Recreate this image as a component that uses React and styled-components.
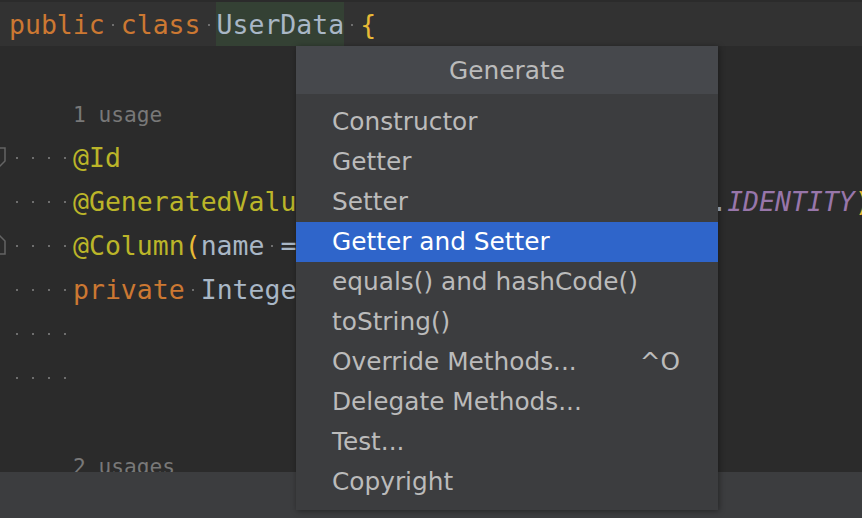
import styled, { createGlobalStyle } from 'styled-components';

const GlobalStyle = createGlobalStyle`
	html, body {
		margin: 0;
		padding: 0;
		background: #2b2b2b;
	}
`

const Page = styled.div`
	position: relative;
	width: 862px;
	height: 518px;
	overflow: hidden;
	display: flex;
	flex-direction: column;
	background: #2b2b2b;
	font-family: "DejaVu Sans Mono", "Liberation Mono", monospace;
	font-size: 26.5px;
`

const ClassLine = styled.div`
	display: flex;
	align-items: center;
	height: 44px;
	margin-top: 2px;
	padding-left: 9px;
	background: #323232;
	white-space: pre;
	flex: none;
`

const CodeArea = styled.div`
	flex: 1;
	min-height: 0;
	overflow: hidden;
	padding-top: 45px;
`

const Line = styled.div`
	position: relative;
	display: flex;
	align-items: center;
	height: 44px;
	padding-left: 9px;
	white-space: pre;
`

const BottomBar = styled.div`
	flex: none;
	height: 46px;
	background: #3c3d3f;
`

const Token = styled.span`
	color: ${p => p.$color || '#a9b7c6'};
	font-style: ${p => p.$italic ? 'italic' : 'normal'};
`

const Space = styled.span`
	flex: none;
	align-self: stretch;
	width: ${p => (p.$count || 1) * 16}px;
	background: radial-gradient(circle at center, #6e6e6e 0.8px, transparent 1.3px) 0 1px / 16px 100% repeat-x;
`

const Highlight = styled.span`
	display: flex;
	align-items: center;
	align-self: stretch;
	margin-left: -1px;
	padding-left: 1px;
	background: #344134;
	color: #a9b7c6;
`

const Hint = styled.span`
	color: #787878;
	font-size: 21.2px;
	padding: 2px 0 0 64px;
`

const GutterIcon = styled.svg`
	position: absolute;
	left: 0;
	top: 12px;
	width: 6px;
	height: 20px;
`

const Menu = styled.div`
	position: absolute;
	left: 296px;
	top: 46px;
	width: 422px;
	display: flex;
	flex-direction: column;
	background: #3c3d3f;
	box-shadow: 1px 1px 6px rgba(0, 0, 0, 0.4);
	font-family: "DejaVu Sans", "Open Sans", sans-serif;
	font-size: 24.8px;
	color: #bbbbbb;
`

const MenuTitle = styled.div`
	height: 48px;
	line-height: 49px;
	text-align: center;
	background: #46484c;
	margin-bottom: 8px;
`

const MenuList = styled.div`
	display: flex;
	flex-direction: column;
	padding-bottom: 8px;
`

const MenuItem = styled.div`
	display: flex;
	align-items: center;
	justify-content: space-between;
	height: 40px;
	line-height: 38px;
	padding: 0 38px 0 36px;
	background: ${p => p.$selected ? '#2f65ca' : 'transparent'};
	color: ${p => p.$selected ? '#ffffff' : '#bbbbbb'};
`

const ORANGE = '#cc7832'
const ANNOTATION = '#bbb529'
const BRACE = '#e8ba36'

const items = [
	{ name: 'Constructor' },
	{ name: 'Getter' },
	{ name: 'Setter' },
	{ name: 'Getter and Setter', selected: true },
	{ name: 'equals() and hashCode()' },
	{ name: 'toString()' },
	{ name: 'Override Methods...', shortcut: '^O' },
	{ name: 'Delegate Methods...' },
	{ name: 'Test...' },
	{ name: 'Copyright' },
]

const Shield = () => (
	<GutterIcon viewBox="0 0 6 20">
		<path d="M-4 1H5V14L0 19L-4 14Z" fill="none" stroke="#646464" strokeWidth="1.5" />
	</GutterIcon>
)

const House = () => (
	<GutterIcon viewBox="0 0 6 20">
		<path d="M-4 19H5V6L0 1L-4 6Z" fill="none" stroke="#646464" strokeWidth="1.5" />
	</GutterIcon>
)

const App = () => (
	<Page>
		<GlobalStyle />
		<ClassLine>
			<Token $color={ORANGE}>public</Token>
			<Space />
			<Token $color={ORANGE}>class</Token>
			<Space />
			<Highlight>UserData</Highlight>
			<Space />
			<Token $color={BRACE}>{'{'}</Token>
		</ClassLine>
		<CodeArea>
			<Line><Hint>1 usage</Hint></Line>
			<Line>
				<Shield />
				<Space $count={4} />
				<Token $color={ANNOTATION}>@Id</Token>
			</Line>
			<Line>
				<Space $count={4} />
				<Token $color={ANNOTATION}>@GeneratedValue</Token>
				<Token $color={BRACE}>(</Token>
				<Token>strategy= GenerationType.</Token>
				<Token $color="#9876aa" $italic>IDENTITY</Token>
				<Token $color={BRACE}>)</Token>
			</Line>
			<Line>
				<House />
				<Space $count={4} />
				<Token $color={ANNOTATION}>@Column</Token>
				<Token $color={BRACE}>(</Token>
				<Token>name</Token>
				<Space />
				<Token>= "id"</Token>
				<Token $color={BRACE}>)</Token>
			</Line>
			<Line>
				<Space $count={4} />
				<Token $color={ORANGE}>private</Token>
				<Space />
				<Token>Integer id;</Token>
			</Line>
			<Line><Space $count={4} /></Line>
			<Line><Space $count={4} /></Line>
			<Line />
			<Line><Hint>2 usages</Hint></Line>
		</CodeArea>
		<BottomBar />
		<Menu>
			<MenuTitle>Generate</MenuTitle>
			<MenuList>
				{items.map(item => (
					<MenuItem key={item.name} $selected={item.selected}>
						<span>{item.name}</span>
						{item.shortcut && <span>{item.shortcut}</span>}
					</MenuItem>
				))}
			</MenuList>
		</Menu>
	</Page>
);

export default App;
